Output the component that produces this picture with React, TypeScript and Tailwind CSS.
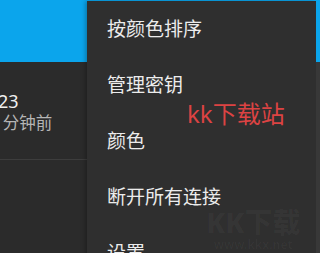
import React from 'react';

const menuItems = ['按颜色排序', '管理密钥', '颜色', '断开所有连接', '设置'];

const App: React.FC = () => {
  return (
    <div
      className="relative w-[320px] h-[253px] overflow-hidden bg-[#2b2b2b]"
      style={{ fontFamily: '"Noto Sans", "Noto Sans CJK SC", sans-serif' }}
    >
      {/* Page behind the menu */}
      <div className="flex flex-col">
        <div className="h-[62px] bg-[#0ba5ec]" />
        <div className="flex h-[98px] flex-col justify-center border-b border-[#3d3d3d] pt-[2px]">
          <p className="-ml-[2px] text-[18px] leading-[22px] text-[#f0f0f0]">23</p>
          <p className="-ml-[11px] mt-[1px] text-[16.5px] leading-[20px] text-[#b5b5b5]">5 分钟前</p>
        </div>
      </div>

      {/* Overflow menu */}
      <div className="absolute left-[87px] top-[1px] w-[229px] h-[260px] bg-[#2f2f2f] shadow-[-2px_0_4px_rgba(0,0,0,0.25)]">
        <ul className="flex flex-col">
          {menuItems.map((item) => (
            <li
              key={item}
              className="flex h-[56px] items-center pl-[20px] text-[19px] text-[#ececec]"
            >
              {item}
            </li>
          ))}
        </ul>
      </div>

      {/* Right edge strip */}
      <div className="absolute right-0 top-0 flex h-full w-[4px] flex-col">
        <div className="h-[62px] bg-[#0ba5ec]" />
        <div className="flex-1 bg-[#383838]" />
      </div>

      {/* Watermarks */}
      <div className="absolute left-[187px] top-[98px] text-[24px] leading-[32px] text-[#dc4343]">
        kk下载站
      </div>
      <div className="absolute left-[206px] top-[206px] flex flex-col items-center text-white/[0.03]">
        <span className="text-[28px] font-black leading-[32px]">KK下载</span>
        <span className="text-[12px] font-bold leading-[14px]">www.kkx.net</span>
      </div>
    </div>
  );
};

export default App;
